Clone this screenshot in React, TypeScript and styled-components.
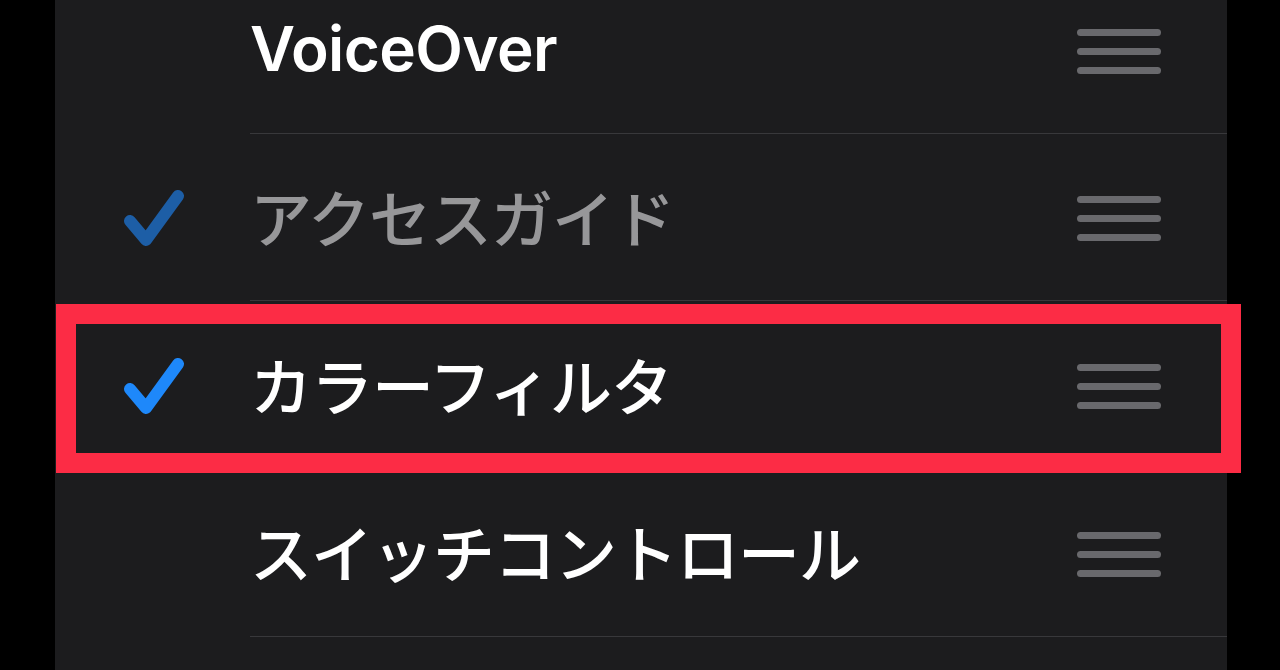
import React from 'react';
import styled, { createGlobalStyle } from 'styled-components';

interface Item {
    label: string;
    checked: boolean;
    dimmed?: boolean;
    highlighted?: boolean;
}

const items: Item[] = [
    { label: 'VoiceOver', checked: false },
    { label: 'アクセスガイド', checked: true, dimmed: true },
    { label: 'カラーフィルタ', checked: true, highlighted: true },
    { label: 'スイッチコントロール', checked: false },
    { label: '', checked: false },
];

const GlobalStyle = createGlobalStyle`
    html, body {
        margin: 0;
        padding: 0;
        background: #000;
    }
    #root {
        width: 1280px;
        height: 670px;
        overflow: hidden;
    }
`;

const Screen = styled.div`
    width: 1280px;
    height: 670px;
    overflow: hidden;
    background: #000;
    display: flex;
`;

const Panel = styled.div`
    margin-left: 55px;
    width: 1172px;
    height: 100%;
    background: #1c1c1e;
    display: flex;
    flex-direction: column;
`;

const List = styled.ul`
    list-style: none;
    margin: -34px 0 0 0;
    padding: 0;
    display: flex;
    flex-direction: column;
`;

const Row = styled.li`
    position: relative;
    height: 167.67px;
    flex-shrink: 0;
    display: flex;
`;

const CheckCell = styled.div`
    width: 195px;
    flex-shrink: 0;
    display: flex;
    align-items: center;
    padding-left: 68px;
    padding-top: 4px;
    box-sizing: border-box;
`;

const Body = styled.div`
    flex: 1;
    display: flex;
    align-items: center;
    justify-content: space-between;
    padding-right: 66px;
    border-bottom: 1px solid #38383b;
`;

const Label = styled.span<{ $dimmed?: boolean }>`
    font-family: 'Inter', 'Noto Sans CJK JP', sans-serif;
    font-size: 62px;
    font-weight: 500;
    letter-spacing: -1px;
    color: ${({ $dimmed }) => ($dimmed ? '#979799' : '#ffffff')};
    white-space: nowrap;
    margin-top: -2px;
`;

const LatinLabel = styled(Label)`
    font-weight: 600;
    letter-spacing: -0.6px;
`;

const Handle = styled.div`
    width: 84px;
    display: flex;
    flex-direction: column;
    gap: 12px;
    margin-top: 4px;
`;

const Bar = styled.span`
    display: block;
    height: 7px;
    border-radius: 4px;
    background: #69696d;
`;

const Highlight = styled.div`
    position: absolute;
    left: 1px;
    top: 3px;
    width: 1185px;
    height: 169px;
    box-sizing: border-box;
    border: 20px solid #fc2c45;
    pointer-events: none;
`;

const Check: React.FC<{ dimmed?: boolean }> = ({ dimmed }) => (
    <svg width="62" height="60" viewBox="0 0 62 60">
        <path
            d="M7 32 L23 51 L55 7"
            fill="none"
            stroke={dimmed ? '#1d5ea6' : '#1e88fa'}
            strokeWidth="12"
            strokeLinecap="round"
            strokeLinejoin="round"
        />
    </svg>
);

const isLatin = (s: string) => /^[\x00-\x7f]+$/.test(s);

export default function App() {
    return (
        <>
            <GlobalStyle />
            <Screen>
                <Panel>
                    <List>
                        {items.map((item, i) => {
                            const Text = isLatin(item.label) ? LatinLabel : Label;
                            return (
                                <Row key={i}>
                                    <CheckCell>
                                        {item.checked && <Check dimmed={item.dimmed} />}
                                    </CheckCell>
                                    <Body>
                                        <Text $dimmed={item.dimmed}>{item.label}</Text>
                                        {item.label && (
                                            <Handle>
                                                <Bar />
                                                <Bar />
                                                <Bar />
                                            </Handle>
                                        )}
                                    </Body>
                                    {item.highlighted && <Highlight />}
                                </Row>
                            );
                        })}
                    </List>
                </Panel>
            </Screen>
        </>
    );
}
